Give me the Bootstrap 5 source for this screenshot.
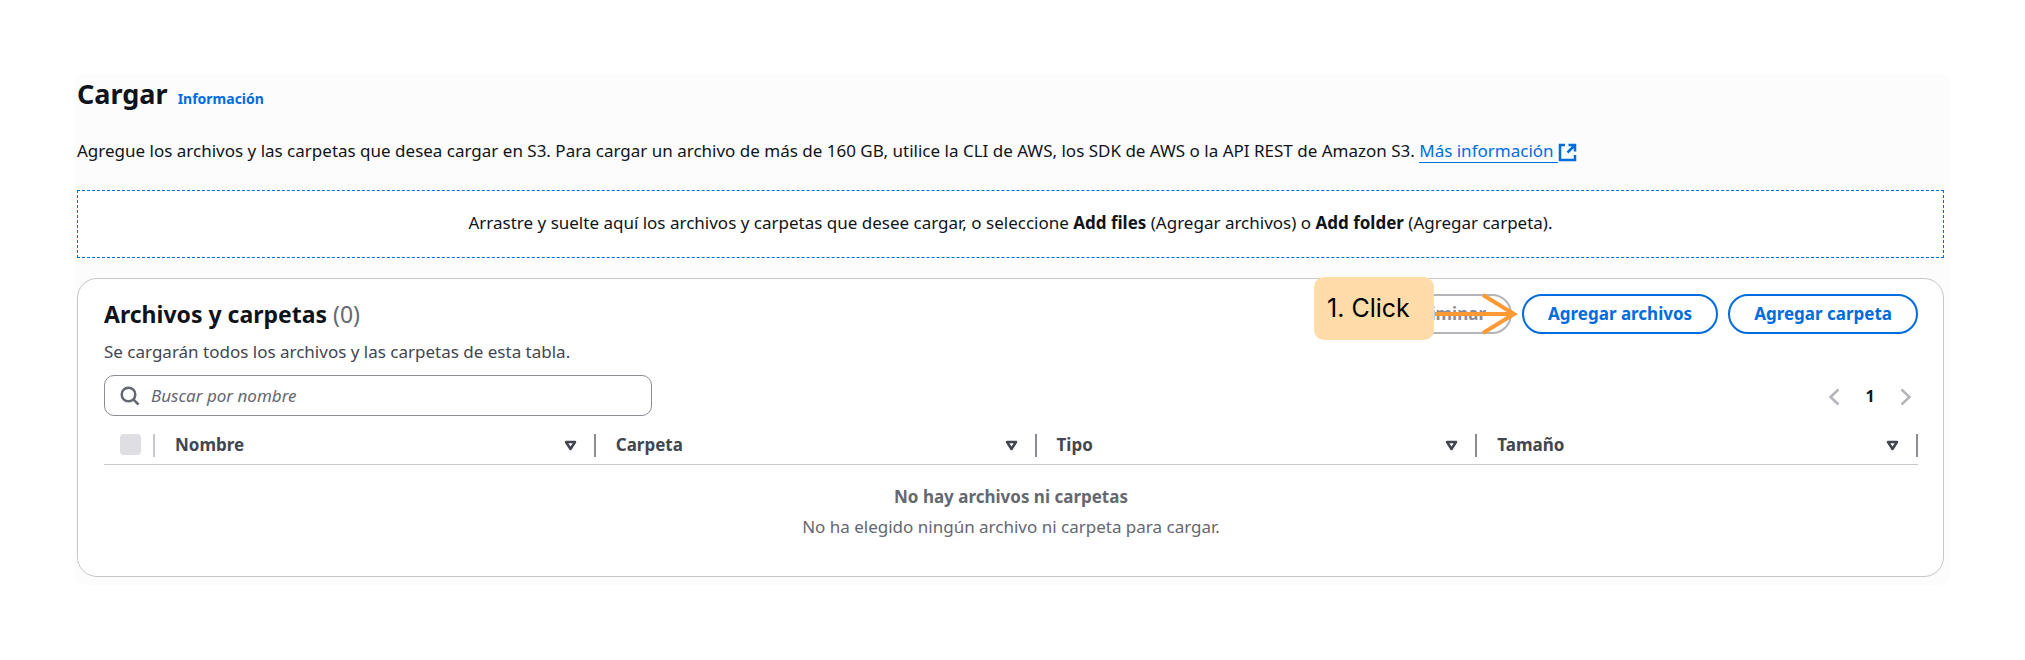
<!DOCTYPE html>
<html lang="es">
<head>
<meta charset="utf-8">
<meta name="viewport" content="width=device-width, initial-scale=1">
<title>Cargar</title>
<link href="https://cdn.jsdelivr.net/npm/bootstrap@5.3.0/dist/css/bootstrap.min.css" rel="stylesheet">
<style>
  :root { --ink: #0f141a; --soft: #424650; --dim: #656871; --blue: #006ce0; --line: #c6c6cd; }
  body { font-family: "Noto Sans", "Open Sans", sans-serif; font-size: 17px; line-height: 24px; color: var(--ink); background: #fff; }
  .page { padding: 74px 75px; }
  .upload-panel { background: #fcfcfd; border-radius: 10px; padding: 0 6px 8px 2px; }
  .title-row { gap: 10px; }
  h1 { font-size: 27px; line-height: 40px; font-weight: 700; }
  .info-link { font-size: 14px; font-weight: 700; color: var(--blue); text-decoration: none; }
  .more-link { color: var(--blue); text-decoration: none; }
  .more-link span { border-bottom: 1px solid var(--blue); }
  .intro { margin: 25px 0 27px; }
  .drop-zone { border: 1px dashed var(--blue); background: #fff; padding: 20px 20px 22px; }
  .files-card { border: 1px solid var(--line); border-radius: 20px; background: #fff; margin-top: 20px; padding: 15px 25px 34px 26px; }
  h2 { font-size: 23px; line-height: 40px; font-weight: 700; }
  h2 span { font-weight: 400; color: var(--dim); }
  .card-note { color: var(--soft); margin: 6px 0 11px; }
  .actions { gap: 10px; }
  .btn-pill { height: 40px; border: 2px solid var(--blue); border-radius: 20px; color: var(--blue); font-weight: 700; line-height: 24px; padding: 6px 24px; background: #fff; }
  .btn-pill:disabled { opacity: 1; background: #fff; border-color: #b4b4bb; color: #8c8c94; }
  .callout-mark { right: -6px; top: -17px; }
  .callout-label { background: #ffdca8; border-radius: 10px; width: 120px; height: 63px; padding-left: 13px; font-family: Inter, sans-serif; font-size: 25px; line-height: 63px; color: #000; }
  .search-box { width: 548px; height: 41px; border: 1px solid #8c8c94; border-radius: 10px; padding: 0 15px; gap: 11px; }
  .search-box input { font: inherit; font-style: italic; outline: 0; }
  .search-box input::placeholder { color: var(--dim); opacity: 1; }
  .pager button { width: 24px; height: 30px; }
  .pager-now { font-size: 16px; font-weight: 700; width: 48px; }
  .files-grid { table-layout: fixed; width: 100%; }
  .files-grid th { height: 48px; color: var(--soft); border-bottom: 1px solid var(--line); padding: 0 0 7px; vertical-align: bottom; }
  .files-grid .pick { width: 51px; }
  .head-cell { height: 23px; border-right: 2px solid #8c8c94; padding: 0 17px 0 20px; }
  .pick .head-cell { border-color: var(--line); padding: 0 0 0 16px; }
  .pick input { appearance: none; width: 21px; height: 21px; border-radius: 4px; background: #dedee3; display: block; }
  .empty-state { color: var(--dim); padding: 17px 0 0; }
  .empty-state p { line-height: 30px; }
</style>
</head>
<body>
<main class="page">
  <div class="upload-panel">
    <header class="title-row d-flex align-items-baseline">
      <h1 class="m-0">Cargar</h1>
      <a class="info-link" href="#info">Información</a>
    </header>
    <p class="intro">Agregue los archivos y las carpetas que desea cargar en S3. Para cargar un archivo de más de 160 GB, utilice la CLI de AWS, los SDK de AWS o la API REST de Amazon S3.
      <a class="more-link" href="#mas"><span>Más información&nbsp;</span><svg width="19" height="19" viewBox="0 0 19 19" fill="none" stroke="currentColor" stroke-width="2.5" aria-hidden="true"><path d="M7 2H2v15h15v-5M10.500 2H17v6.500M17 2l-7.500 7.500"/></svg></a></p>
    <div class="drop-zone text-center">Arrastre y suelte aquí los archivos y carpetas que desee cargar, o seleccione <b>Add files</b> (Agregar archivos) o <b>Add folder</b> (Agregar carpeta).</div>

    <section class="files-card">
      <div class="d-flex justify-content-between">
        <h2 class="m-0">Archivos y carpetas <span>(0)</span></h2>
        <div class="actions d-flex">
          <div class="position-relative">
            <button class="btn-pill" type="button" disabled>Eliminar</button>
            <div class="callout-mark position-absolute d-flex align-items-center">
              <div class="callout-label text-nowrap">1. Click</div>
              <svg width="84" height="54" viewBox="0 0 84 54" fill="none" stroke="#ff9933" stroke-width="4" aria-hidden="true"><path d="M1 32h78M49 13l31 19-31 19"/></svg>
            </div>
          </div>
          <button class="btn-pill" type="button">Agregar archivos</button>
          <button class="btn-pill" type="button">Agregar carpeta</button>
        </div>
      </div>
      <p class="card-note">Se cargarán todos los archivos y las carpetas de esta tabla.</p>
      <div class="d-flex justify-content-between align-items-center">
        <label class="search-box d-flex align-items-center">
          <svg width="20" height="20" viewBox="0 0 20 20" fill="none" stroke="#656871" stroke-width="2.500" aria-hidden="true"><circle cx="8.500" cy="8.500" r="6.800"/><path d="M13.300 13.300l5.200 5.200"/></svg>
          <input class="border-0 p-0 flex-grow-1 bg-transparent" type="text" placeholder="Buscar por nombre" aria-label="Buscar por nombre">
        </label>
        <nav class="pager d-flex align-items-center" aria-label="Paginación">
          <button class="border-0 p-0 bg-transparent" type="button" disabled aria-label="Anterior"><svg width="12" height="18" viewBox="0 0 12 18" fill="none" stroke="#b4b4bb" stroke-width="2.500"><path d="M10.500 1.500L2.500 9l8 7.500"/></svg></button>
          <span class="pager-now text-center">1</span>
          <button class="border-0 p-0 bg-transparent" type="button" disabled aria-label="Siguiente"><svg width="12" height="18" viewBox="0 0 12 18" fill="none" stroke="#b4b4bb" stroke-width="2.500"><path d="M1.500 1.500l8 7.500-8 7.500"/></svg></button>
        </nav>
      </div>
      <table class="files-grid">
        <thead>
          <tr>
            <th class="pick"><div class="head-cell"><input type="checkbox" disabled aria-label="Seleccionar todo"></div></th>
            <th><div class="head-cell d-flex align-items-center justify-content-between">Nombre <svg width="13" height="11" viewBox="0 0 13 11" fill="none" stroke="#424650" stroke-width="2.500" stroke-linejoin="round"><path d="M2 2h9L6.500 9z"/></svg></div></th>
            <th><div class="head-cell d-flex align-items-center justify-content-between">Carpeta <svg width="13" height="11" viewBox="0 0 13 11" fill="none" stroke="#424650" stroke-width="2.500" stroke-linejoin="round"><path d="M2 2h9L6.500 9z"/></svg></div></th>
            <th><div class="head-cell d-flex align-items-center justify-content-between">Tipo <svg width="13" height="11" viewBox="0 0 13 11" fill="none" stroke="#424650" stroke-width="2.500" stroke-linejoin="round"><path d="M2 2h9L6.500 9z"/></svg></div></th>
            <th><div class="head-cell d-flex align-items-center justify-content-between">Tamaño <svg width="13" height="11" viewBox="0 0 13 11" fill="none" stroke="#424650" stroke-width="2.500" stroke-linejoin="round"><path d="M2 2h9L6.500 9z"/></svg></div></th>
          </tr>
        </thead>
        <tbody>
          <tr><td class="empty-state text-center" colspan="5"><p class="m-0 fw-bold">No hay archivos ni carpetas</p><p class="m-0">No ha elegido ningún archivo ni carpeta para cargar.</p></td></tr>
        </tbody>
      </table>
    </section>
  </div>
</main>
<script src="https://cdn.jsdelivr.net/npm/bootstrap@5.3.0/dist/js/bootstrap.bundle.min.js"></script>
</body>
</html>
